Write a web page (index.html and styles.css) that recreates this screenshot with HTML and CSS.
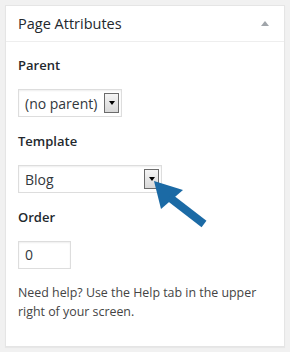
FILE: index.html
```html
<!DOCTYPE html>
<html lang="en">
<head>
<meta charset="UTF-8">
<meta name="viewport" content="width=device-width, initial-scale=1.0">
<title>Page Attributes</title>
<link rel="stylesheet" href="styles.css">
</head>
<body>
    <div class="postbox">
        <div class="hndle">
            <h3>Page Attributes</h3>
            <span class="toggle"></span>
        </div>
        <div class="inside">
            <div class="label label-first">Parent</div>
            <div class="select select-parent">
                <span class="select-text">(no parent)</span>
                <span class="select-btn"><span class="caret"></span></span>
            </div>

            <div class="label">Template</div>
            <div class="select select-template">
                <span class="select-text">Blog</span>
                <span class="select-btn"><span class="caret"></span></span>
            </div>

            <div class="label">Order</div>
            <div class="order-input">0</div>

            <p class="help">Need help? Use the Help tab in the upper right of your screen.</p>
        </div>
        <!-- pointer arrow drawn over the template dropdown -->
        <svg class="pointer" width="62" height="54" viewBox="150 175 62 54">
            <polygon points="154,181 183,190 161,209" fill="#1b6aa5"/>
            <line x1="169" y1="197" x2="204" y2="224" stroke="#1b6aa5" stroke-width="8"/>
        </svg>
    </div>
</body>
</html>
```
FILE: styles.css
```css
/* Page Attributes meta box */
body {
    margin: 0;
    padding: 5px;
    background-color: #f1f1f1;
    font-family: "Open Sans", sans-serif;
    color: #444;
}

.postbox {
    width: 278px;
    height: 340px;
    background-color: #fff;
    border: 1px solid #e5e5e5;
    box-shadow: 0 1px 1px rgba(0, 0, 0, 0.04);
}

.hndle {
    height: 35px;
    border-bottom: 1px solid #eee;
    display: flex;
    align-items: center;
    justify-content: space-between;
    padding: 0 15px 0 12px;
}

.hndle h3 {
    margin: 0;
    font-size: 14.5px;
    font-weight: 400;
    color: #23282d;
}

.toggle {
    width: 0;
    height: 0;
    border-left: 4px solid transparent;
    border-right: 4px solid transparent;
    border-bottom: 5px solid #a0a5aa;
}

.inside {
    padding: 0 12px;
}

.label {
    font-size: 13px;
    font-weight: 600;
    line-height: 20px;
    color: #23282d;
    margin: 14px 0;
}

.label-first {
    margin-top: 13px;
}

.select {
    height: 26px;
    display: flex;
    align-items: center;
    justify-content: space-between;
    border: 1px solid #ddd;
    box-shadow: inset 0 1px 2px rgba(0, 0, 0, 0.07);
    padding: 0 2px 0 6px;
    font-size: 14px;
    color: #32373c;
}

.select-parent {
    width: 94px;
}

.select-template {
    width: 134px;
}

.select-btn {
    width: 13px;
    height: 18px;
    border: 1px solid #6b6b6b;
    background: linear-gradient(#f4f4f4, #d8d8d8);
    display: flex;
    align-items: center;
    justify-content: center;
}

.caret {
    width: 0;
    height: 0;
    border-left: 3px solid transparent;
    border-right: 3px solid transparent;
    border-top: 4px solid #000;
}

.order-input {
    width: 45px;
    height: 26px;
    line-height: 26px;
    border: 1px solid #ddd;
    box-shadow: inset 0 1px 2px rgba(0, 0, 0, 0.07);
    padding: 0 0 0 6px;
    font-size: 14px;
    color: #32373c;
}

.help {
    margin: 14px 0 0;
    font-size: 12.4px;
    line-height: 19px;
}

.pointer {
    position: absolute;
    left: 150px;
    top: 175px;
}
```
